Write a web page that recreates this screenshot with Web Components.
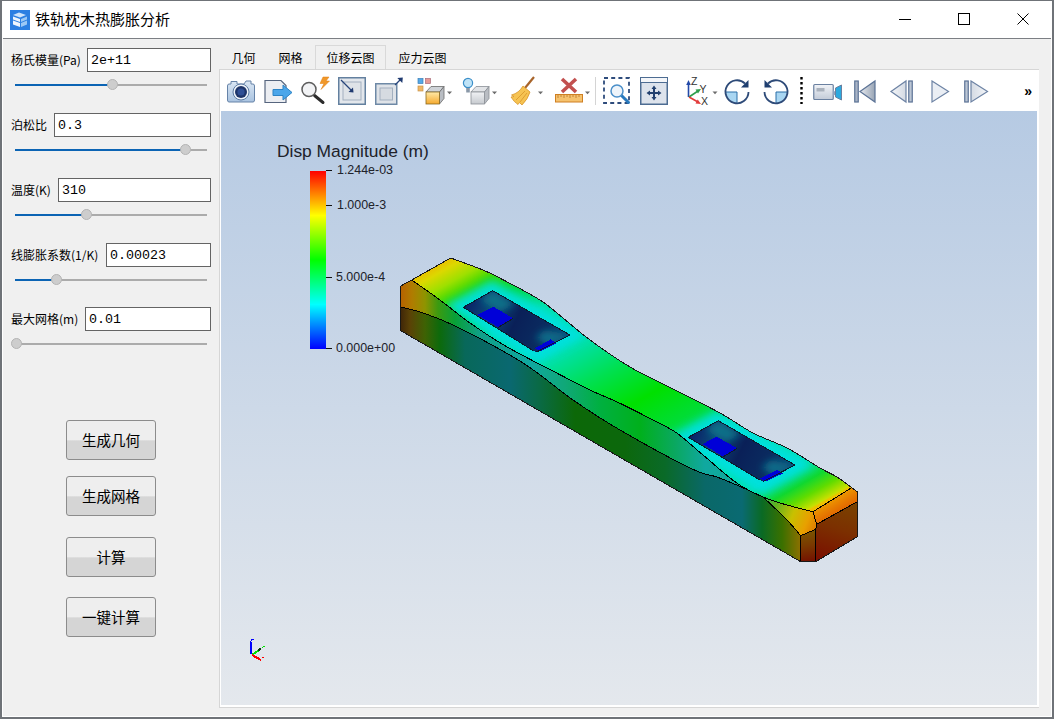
<!DOCTYPE html>
<html lang="zh">
<head>
<meta charset="utf-8">
<title>铁轨枕木热膨胀分析</title>
<style>
    html, body { margin: 0; padding: 0; background: #f0f0f0; }
    body { font-family: "Noto Sans CJK SC", "Liberation Sans", sans-serif; font-size: 12px; color: #000; }
</style>
</head>
<body>
<app-window>
    <title-bar slot="title">铁轨枕木热膨胀分析</title-bar>
    <side-panel slot="side">
        <param-row label="杨氏模量(Pa)" value="2e+11" lw="76" pos="97"></param-row>
        <param-row label="泊松比" value="0.3" lw="43" pos="170"></param-row>
        <param-row label="温度(K)" value="310" lw="47" pos="71"></param-row>
        <param-row label="线膨胀系数(1/K)" value="0.00023" lw="95" pos="41" style="height:64px"></param-row>
        <param-row label="最大网格(m)" value="0.01" lw="74" pos="1"></param-row>
        <sim-button style="margin-top:48px">生成几何</sim-button>
        <sim-button style="margin-top:16px">生成网格</sim-button>
        <sim-button style="margin-top:21px">计算</sim-button>
        <sim-button style="margin-top:20px">一键计算</sim-button>
    </side-panel>
    <tab-pane slot="pane">
        <tab-item slot="tabs" style="padding-left:10.5px;padding-right:12.5px">几何</tab-item>
        <tab-item slot="tabs" style="padding-left:10.5px;padding-right:12.5px">网格</tab-item>
        <tab-item slot="tabs" active>位移云图</tab-item>
        <tab-item slot="tabs" style="padding-left:12.5px">应力云图</tab-item>
        <tool-bar>
            <tool-icon name="camera" w="28" style="margin-left:6px"></tool-icon>
            <tool-icon name="exportDoc" w="29" style="margin-left:9px"></tool-icon>
            <tool-icon name="spark" w="25" style="margin-left:8px"></tool-icon>
            <tool-icon name="boxIn" w="28" style="margin-left:12px"></tool-icon>
            <tool-icon name="boxOut" w="28" style="margin-left:9px"></tool-icon>
            <tool-icon name="cubeColors" w="35" style="margin-left:14px"></tool-icon>
            <tool-icon name="cubeLight" w="35" style="margin-left:10px"></tool-icon>
            <tool-icon name="broom" w="33" style="margin-left:13px"></tool-icon>
            <tool-icon name="ruler" w="35" style="margin-left:12px"></tool-icon>
            <tool-icon name="sep" w="1" style="margin-left:5px"></tool-icon>
            <tool-icon name="dashZoom" w="28" style="margin-left:7px"></tool-icon>
            <tool-icon name="moveBox" w="28" style="margin-left:9px"></tool-icon>
            <tool-icon name="axes" w="32" style="margin-left:18px"></tool-icon>
            <tool-icon name="rotCw" w="27" style="margin-left:6px"></tool-icon>
            <tool-icon name="rotCcw" w="27" style="margin-left:11px"></tool-icon>
            <tool-icon name="dots" w="3" style="margin-left:11px"></tool-icon>
            <tool-icon name="video" w="29" style="margin-left:10px"></tool-icon>
            <tool-icon name="first" w="22" style="margin-left:12px"></tool-icon>
            <tool-icon name="prev" w="24" style="margin-left:14px"></tool-icon>
            <tool-icon name="play" w="19" style="margin-left:17px"></tool-icon>
            <tool-icon name="next" w="25" style="margin-left:14px"></tool-icon>
            <span slot="more">»</span>
        </tool-bar>
        <vtk-view></vtk-view>
    </tab-pane>
</app-window>

<script>
class AppWindow extends HTMLElement {
    constructor() {
        super();
        this.attachShadow({ mode: 'open' });
        this.shadowRoot.innerHTML = `
            <style>
                :host {
                    display: flex;
                    flex-direction: column;
                    box-sizing: border-box;
                    width: 1054px;
                    height: 719px;
                    border: solid #6f7378;
                    border-width: 1px 2px 2px 2px;
                    background: #fff;
                    overflow: hidden;
                }
                .main {
                    flex: 1;
                    min-height: 0;
                    display: flex;
                    background: #f0f0f0;
                    margin: 0 1px 1px 1px;
                    border-top: 1px solid #7c7f84;
                }
            </style>
            <slot name="title"></slot>
            <div class="main">
                <slot name="side"></slot>
                <slot name="pane"></slot>
            </div>
        `;
    }
}

class TitleBar extends HTMLElement {
    constructor() {
        super();
        this.attachShadow({ mode: 'open' });
        this.shadowRoot.innerHTML = `
            <style>
                :host {
                    display: flex;
                    align-items: center;
                    height: 37px;
                    flex: none;
                    background: #fff;
                    font-size: 15px;
                    padding-left: 8px;
                }
                .logo { width: 20px; height: 20px; margin: 0 5px 0 0; flex: none; }
                .text { flex: 1; position: relative; top: -1px; }
                .btn { width: 12px; height: 12px; margin-right: 47px; flex: none; display: block; position: relative; top: -1px; }
                .btn:last-child { margin-right: 23px; }
            </style>
            <svg class="logo" viewBox="0 0 20 20">
                <rect width="20" height="20" fill="#2c7fe2"/>
                <path d="M3 5 L9 2.5 L16 5 L10 7.5 Z" fill="#cfe4fb"/>
                <path d="M3 6.5 L10 9 V12 L3 9.5 Z M3 10.5 L10 13 V17 L3 14.5 Z" fill="#fff" opacity=".92"/>
                <path d="M11 9 L17 6.5 V9.5 L11 12 Z M11 13 L17 10.5 V14.5 L11 17 Z" fill="#9cc8f5"/>
            </svg>
            <span class="text"><slot></slot></span>
            <svg class="btn" viewBox="0 0 12 12"><path d="M0 6.5 H12" stroke="#000" fill="none"/></svg>
            <svg class="btn" viewBox="0 0 12 12"><rect x=".5" y=".5" width="11" height="11" stroke="#000" fill="none"/></svg>
            <svg class="btn" viewBox="0 0 12 12"><path d="M.5 .5 L11.5 11.5 M11.5 .5 L.5 11.5" stroke="#000" fill="none"/></svg>
        `;
    }
}

class SidePanel extends HTMLElement {
    constructor() {
        super();
        this.attachShadow({ mode: 'open' });
        this.shadowRoot.innerHTML = `
            <style>
                :host {
                    display: flex;
                    flex-direction: column;
                    box-sizing: border-box;
                    width: 216px;
                    flex: none;
                    padding: 9px 8px 0 8px;
                }
            </style>
            <slot></slot>
        `;
    }
}

class ParamRow extends HTMLElement {
    constructor() {
        super();
        this.attachShadow({ mode: 'open' });
    }

    connectedCallback() {
        const label = this.getAttribute('label');
        const value = this.getAttribute('value');
        const lw = this.getAttribute('lw');
        const pos = Number(this.getAttribute('pos'));

        this.shadowRoot.innerHTML = `
            <style>
                :host { display: block; height: 65px; flex: none; }
                .row { display: flex; align-items: center; height: 24px; }
                .label { width: ${lw}px; flex: none; white-space: nowrap; font-size: 12px; position: relative; top: -1px; }
                .field {
                    flex: 1;
                    box-sizing: border-box;
                    height: 24px;
                    border: 1px solid #646464;
                    background: #fff;
                    padding: 1px 0 0 3px;
                    font: 13.33px/22px "Liberation Mono", monospace;
                }
                .slider {
                    position: relative;
                    display: flex;
                    align-items: center;
                    height: 11px;
                    margin: 7px 4px 0 4px;
                }
                .fill { width: ${pos}px; height: 2px; background: #0b64b4; flex: none; }
                .rest { flex: 1; height: 2px; background: #ababab; }
                .handle {
                    position: absolute;
                    left: ${pos - 5.5}px;
                    top: 0;
                    box-sizing: border-box;
                    width: 11px;
                    height: 11px;
                    border-radius: 50%;
                    background: #cdcdcd;
                    border: 1px solid #b4b4b4;
                }
            </style>
            <div class="row">
                <span class="label">${label}</span>
                <div class="field">${value}</div>
            </div>
            <div class="slider">
                <div class="fill"></div>
                <div class="rest"></div>
                <div class="handle"></div>
            </div>
        `;
    }
}

class SimButton extends HTMLElement {
    constructor() {
        super();
        this.attachShadow({ mode: 'open' });
        this.shadowRoot.innerHTML = `
            <style>
                :host {
                    display: flex;
                    align-items: center;
                    justify-content: center;
                    box-sizing: border-box;
                    flex: none;
                    align-self: flex-start;
                    width: 90px;
                    height: 40px;
                    margin-left: 55px;
                    padding-bottom: 2px;
                    border: 1px solid #8c8c8c;
                    border-radius: 3px;
                    background: linear-gradient(#eeeeee 0, #eeeeee 50%, #d5d5d5 52%, #d5d5d5 100%);
                    font-size: 14.5px;
                }
            </style>
            <slot></slot>
        `;
    }
}

class TabPane extends HTMLElement {
    constructor() {
        super();
        this.attachShadow({ mode: 'open' });
        this.shadowRoot.innerHTML = `
            <style>
                :host {
                    display: flex;
                    flex-direction: column;
                    box-sizing: border-box;
                    width: 820px;
                    flex: none;
                    padding-top: 6px;
                    padding-bottom: 8px;
                }
                .tabs { display: flex; height: 24px; flex: none; padding-left: 2px; }
                .frame {
                    flex: 1;
                    min-height: 0;
                    display: flex;
                    flex-direction: column;
                    background: #fff;
                    border: solid #d6d6d6;
                    border-width: 1px 0 1px 1px;
                    padding: 0 2px 2px 1px;
                }
            </style>
            <div class="tabs"><slot name="tabs"></slot></div>
            <div class="frame"><slot></slot></div>
        `;
    }
}

class TabItem extends HTMLElement {
    constructor() {
        super();
        this.attachShadow({ mode: 'open' });
        this.shadowRoot.innerHTML = `
            <style>
                :host {
                    display: flex;
                    align-items: center;
                    box-sizing: border-box;
                    height: 24px;
                    padding: 1px 11.5px 0 11.5px;
                    font-size: 12px;
                    white-space: nowrap;
                }
                :host([active]) {
                    border: solid #d9d9d9;
                    border-width: 1px 1px 0 1px;
                    padding: 0 10.5px 0 10.5px;
                }
            </style>
            <slot></slot>
        `;
    }
}

class ToolBar extends HTMLElement {
    constructor() {
        super();
        this.attachShadow({ mode: 'open' });
        this.shadowRoot.innerHTML = `
            <style>
                :host {
                    display: flex;
                    align-items: flex-start;
                    box-sizing: border-box;
                    height: 41px;
                    flex: none;
                    padding-top: 7px;
                    background: #fff;
                }
                .more {
                    margin-left: auto;
                    margin-right: 5px;
                    font: bold 14px/28px "Liberation Sans", sans-serif;
                }
            </style>
            <slot></slot>
            <span class="more"><slot name="more"></slot></span>
        `;
    }
}

// icon bodies, each drawn in a box of (w x 28)
const ARROW = x => `<path d="M${x} 14.5 h5 l-2.5 2.8 z" fill="#6b6b6b"/>`;
const ICONS = {
    camera: `<defs><linearGradient id="g" x1="0" y1="0" x2="0" y2="1"><stop offset="0" stop-color="#dbe7f4"/><stop offset="1" stop-color="#a9c3e0"/></linearGradient></defs>
        <path d="M4 7 V4.5 H10 V7 H17 L19 4 H24 V7 H26 Q27.5 7 27.5 9 V23 Q27.5 25 26 25 H2 Q.5 25 .5 23 V9 Q.5 7 2 7 Z" fill="url(#g)" stroke="#6683a8"/>
        <circle cx="14" cy="15" r="8" fill="#eef3f9" stroke="#5c7ba3"/>
        <circle cx="14" cy="15" r="6" fill="#1d3468"/>
        <circle cx="14" cy="15" r="3.6" fill="#2f4f95"/>`,
    exportDoc: `<path d="M1 3.5 H17 L22 8.5 V25.5 H1 Z" fill="#eceef2" stroke="#56657e" stroke-width="1.2"/>
        <path d="M9 12.5 H19 V8 L28 15.5 L19 23 V18.5 H9 Z" fill="#4ba6ea" stroke="#2c83c5"/>`,
    spark: `<path d="M22 0 L28 0 L25 4 L28.5 4 L20 12.5 L23 6.5 L19 6.5 Z" fill="#f0982a" stroke="#e07f12" stroke-width=".5"/>
        <path d="M13.5 18.5 L22 25.5" stroke="#2b2b2b" stroke-width="3" stroke-linecap="round"/>
        <circle cx="8" cy="12.5" r="7" fill="#f2f3f5" stroke="#5d5d5d" stroke-width="1.5"/>`,
    boxIn: `<rect x=".75" y=".75" width="26.5" height="26.5" fill="#e3e7ec" stroke="#63809f" stroke-width="1.5"/>
        <rect x="5" y="5" width="18" height="18" fill="#dfe3e8" stroke="#a3b0bf"/>
        <path d="M3 3 L14 14" stroke="#26447a" stroke-width="1.2"/><path d="M15.5 15.5 L15 10.5 L10.5 15 Z" fill="#1f3a70"/>`,
    boxOut: `<rect x=".75" y="6.75" width="21" height="20.5" fill="#dfe3e8" stroke="#6e89a6" stroke-width="1.5"/>
        <rect x="5" y="11" width="12.5" height="12" fill="#d6dbe1" stroke="#a3b0bf"/>
        <path d="M20 8 L26 2" stroke="#26447a" stroke-width="1.2"/><path d="M27.8 .5 L27.3 6 L22.3 1 Z" fill="#1f3a70"/>`,
    cubeColors: `<defs><linearGradient id="g" x1="0" y1="0" x2="0" y2="1"><stop offset="0" stop-color="#ffeaa8"/><stop offset="1" stop-color="#f5a92e"/></linearGradient></defs>
        <rect x="1" y="1.5" width="5" height="5" fill="#55a8e6" stroke="#3b7fb8" stroke-width=".7"/>
        <rect x="8.5" y="1.5" width="5" height="5" fill="#e79a94" stroke="#a86a7a" stroke-width=".7"/>
        <rect x="1" y="9" width="5" height="5" fill="#f1b765" stroke="#c8954a" stroke-width=".7"/>
        <path d="M9 15 L14 9.5 H27 L22.5 15 Z" fill="#cfd3d8" stroke="#6a6a6a" stroke-width=".8"/>
        <path d="M22.5 15 L27 9.5 V21.5 L22.5 27 Z" fill="#b9bdc3" stroke="#6a6a6a" stroke-width=".8"/>
        <rect x="9" y="15" width="13.5" height="12" fill="url(#g)" stroke="#8a6a20" stroke-width=".8"/>${ARROW(30)}`,
    cubeLight: `<defs><linearGradient id="g" x1="0" y1="0" x2="0" y2="1"><stop offset="0" stop-color="#f0f2f4"/><stop offset="1" stop-color="#c6cacf"/></linearGradient></defs>
        <circle cx="6" cy="6" r="4.6" fill="#bfe3f7" stroke="#3b8fc9" stroke-width="1.2"/>
        <rect x="4.2" y="11" width="3.6" height="4.5" fill="#8a98a8"/>
        <path d="M9 15 L14 9.5 H27 L22.5 15 Z" fill="#e2e4e7" stroke="#8a8f96" stroke-width=".8"/>
        <path d="M22.5 15 L27 9.5 V21.5 L22.5 27 Z" fill="#b9bdc3" stroke="#8a8f96" stroke-width=".8"/>
        <rect x="9" y="15" width="13.5" height="12" fill="url(#g)" stroke="#8a8f96" stroke-width=".8"/>${ARROW(30)}`,
    broom: `<path d="M24 0 L15 11" stroke="#a8642a" stroke-width="2.2"/>
        <path d="M13 9 L20 15 Q18 22 12 28 L9.5 25.5 L8 27.5 Q4 25 1 20 L4 19.5 L1.5 18 Q9 16 13 9 Z" fill="#f6c352" stroke="#d8962a" stroke-width=".8"/>
        <path d="M15 14 L6 23 M17 16 L10 25" stroke="#d8962a" stroke-width=".8"/>${ARROW(28)}`,
    ruler: `<path d="M7 2 L21 15 M21 2 L7 15" stroke="#c2504f" stroke-width="3.6"/>
        <rect x=".5" y="17.5" width="27" height="7.5" fill="#f5c26e" stroke="#cf7f22"/>
        <path d="M3 18 v3 M6 18 v2 M9 18 v3 M12 18 v2 M15 18 v3 M18 18 v2 M21 18 v3 M24 18 v2" stroke="#b9762a" stroke-width=".8"/>${ARROW(30)}`,
    sep: `<rect x="0" y="0" width="1" height="28" fill="#d4d4d4"/>`,
    dashZoom: `<rect x="1" y="1" width="25" height="25" fill="none" stroke="#2e4c7c" stroke-width="1.8" stroke-dasharray="4 3.2"/>
        <path d="M18 18 L25.5 25.5" stroke="#2879bd" stroke-width="3" stroke-linecap="round"/>
        <circle cx="14" cy="14" r="6" fill="#eef4fa" stroke="#4b8fc9" stroke-width="1.5"/>`,
    moveBox: `<rect x=".75" y=".75" width="26.5" height="26.5" fill="#dde3ec" stroke="#4d6c92" stroke-width="1.5"/>
        <rect x="1" y="1" width="26" height="5" fill="#f4f6f9"/><path d="M1 5.5 H27" stroke="#4d6c92"/>
        <path d="M14 8.5 L16.5 12 H15 V15 H18 V13.5 L21.5 16 L18 18.5 V17 H15 V20 H16.5 L14 23.5 L11.5 20 H13 V17 H10 V18.5 L6.5 16 L10 13.5 V15 H13 V12 H11.5 Z" fill="#22406f"/>`,
    axes: `<path d="M2.5 20 V7" stroke="#2349a8" stroke-width="1.6"/><path d="M2.5 3 L.2 8 H4.8 Z" fill="#2349a8"/>
        <path d="M3 20 L12 14" stroke="#2f9e4c" stroke-width="1.6"/><path d="M15 12 L9.5 12.6 L12 16.6 Z" fill="#2f9e4c"/>
        <path d="M3 20 L12 25" stroke="#e23a3a" stroke-width="1.6"/><path d="M15 27 L9.5 26.6 L11.7 22.6 Z" fill="#e23a3a"/>
        <text x="5" y="8" font-family="Liberation Sans, sans-serif" font-size="10.5" fill="#333">Z</text>
        <text x="13.5" y="15.5" font-family="Liberation Sans, sans-serif" font-size="10.5" fill="#333">Y</text>
        <text x="15" y="27.5" font-family="Liberation Sans, sans-serif" font-size="10.5" fill="#333">X</text>
        <path d="M26.5 14.5 h5 l-2.5 2.8 z" fill="#6b6b6b"/>`,
    rotCw: `<path d="M2 15 H13 V26 A11 11 0 0 1 2 15 Z" fill="#a9d6f2"/>
        <path d="M2 15 H13 V26" fill="none" stroke="#2b6ea8" stroke-width="1"/>
        <path d="M21 6.5 A11.5 11.5 0 1 0 24.5 15" fill="none" stroke="#2d4a78" stroke-width="1.8"/>
        <path d="M24.5 3 V10.5 H17 Z" fill="#1f3f70"/>`,
    rotCcw: `<path d="M25 15 H14 V26 A11 11 0 0 0 25 15 Z" fill="#a9d6f2"/>
        <path d="M25 15 H14 V26" fill="none" stroke="#2b6ea8" stroke-width="1"/>
        <path d="M6 6.5 A11.5 11.5 0 1 1 2.5 15" fill="none" stroke="#2d4a78" stroke-width="1.8"/>
        <path d="M2.5 3 V10.5 H10 Z" fill="#1f3f70"/>`,
    dots: `<path d="M1.5 0 V27" stroke="#000" stroke-width="2.4" stroke-dasharray="2.4 2.6"/>`,
    video: `<defs><linearGradient id="g" x1="0" y1="0" x2="0" y2="1"><stop offset="0" stop-color="#f1f3f7"/><stop offset="1" stop-color="#c3cbd8"/></linearGradient></defs>
        <rect x=".75" y="7.5" width="19.5" height="15" rx="1" fill="url(#g)" stroke="#6a80a0" stroke-width="1.2"/>
        <rect x="3.5" y="11" width="8" height="3.5" fill="#aab2bd"/>
        <path d="M20 13 L22.5 15 V17.5 L20 19 Z" fill="#8ea3c0"/>
        <path d="M22.5 11 L28.5 8 V23 L22.5 20 Z" fill="#2da9de" stroke="#6a80a0"/>`,
    first: `<defs><linearGradient id="g" x1="0" y1="0" x2="1" y2="0"><stop offset="0" stop-color="#e8ebf0"/><stop offset="1" stop-color="#98a4b4"/></linearGradient></defs>
        <rect x=".75" y="4" width="3.5" height="21" fill="#a9b4c6" stroke="#5c7396" stroke-width="1.2"/>
        <path d="M6 14.5 L21 4 V25 Z" fill="url(#g)" stroke="#5c7396" stroke-width="1.2"/>`,
    prev: `<defs><linearGradient id="g" x1="0" y1="0" x2="1" y2="0"><stop offset="0" stop-color="#f4f6f9"/><stop offset="1" stop-color="#d4dae3"/></linearGradient></defs>
        <path d="M1 14.5 L16 4 V25 Z" fill="url(#g)" stroke="#6d83a4" stroke-width="1.2"/>
        <rect x="18.75" y="4" width="3.5" height="21" fill="#bcc6d5" stroke="#5c7396" stroke-width="1.2"/>`,
    play: `<path d="M1 4 L17.5 14.5 L1 25 Z" fill="#eaeef4" stroke="#6d83a4" stroke-width="1.2"/>`,
    next: `<defs><linearGradient id="g" x1="0" y1="0" x2="1" y2="0"><stop offset="0" stop-color="#d4dae3"/><stop offset="1" stop-color="#f4f6f9"/></linearGradient></defs>
        <rect x=".75" y="4" width="3.5" height="21" fill="#bcc6d5" stroke="#5c7396" stroke-width="1.2"/>
        <path d="M7 4 L23.5 14.5 L7 25 Z" fill="url(#g)" stroke="#6d83a4" stroke-width="1.2"/>`
};

class ToolIcon extends HTMLElement {
    constructor() {
        super();
        this.attachShadow({ mode: 'open' });
    }

    connectedCallback() {
        const w = Number(this.getAttribute('w'));
        const body = ICONS[this.getAttribute('name')];
        this.shadowRoot.innerHTML = `
            <style>
                :host { display: block; flex: none; width: ${w}px; height: 28px; }
                svg { display: block; overflow: visible; }
            </style>
            <svg width="${w}" height="28" viewBox="0 0 ${w} 28">${body}</svg>
        `;
    }
}

// smooth path through a list of points
function smooth(pts) {
    let d = '';
    for (let i = 0; i < pts.length - 1; i++) {
        const p0 = pts[i - 1] || pts[i];
        const p1 = pts[i];
        const p2 = pts[i + 1];
        const p3 = pts[i + 2] || p2;
        const c1 = [p1[0] + (p2[0] - p0[0]) / 6, p1[1] + (p2[1] - p0[1]) / 6];
        const c2 = [p2[0] - (p3[0] - p1[0]) / 6, p2[1] - (p3[1] - p1[1]) / 6];
        d += ` C${c1[0].toFixed(1)} ${c1[1].toFixed(1)} ${c2[0].toFixed(1)} ${c2[1].toFixed(1)} ${p2[0]} ${p2[1]}`;
    }
    return d;
}

const stops = list => list.map(([o, c]) => `<stop offset="${o}" stop-color="${c}"/>`).join('');
// x based stops for the side faces (400..860)
const xStops = list => stops(list.map(([x, c]) => [((x - 400) / 460).toFixed(4), c]));
// position along the beam centre line for the top face
const tStops = list => stops(list.map(([x, c]) => [((x - 430) / 402).toFixed(4), c]));

class BeamModel extends HTMLElement {
    constructor() {
        super();
        this.attachShadow({ mode: 'open' });
    }

    connectedCallback() {
        const topEdge = [[450.7,258],[483,270],[506.7,281.7],[540,300],[563,318],[590,340],[630,367],[675,390],[720,413],[753,433],[787,448],[820,468],[837,477],[851.7,487.7]];
        const edge = [[411.7,280],[440,300],[470,323],[506.7,346.7],[556.7,373],[590,390],[620,403.3],[653,420],[676.7,433],[703,455],[736.7,483],[763,497],[787,505],[813,511.7]];
        const curve = [[400.7,307],[423,313],[456.7,326.7],[523,363],[573,400],[620,430],[690,468],[716.7,477],[736.7,485],[763,497]];
        const curve2 = [[763,497],[787,520],[800.7,535.7]];
        const rev = a => a.slice().reverse();

        const topFace = `M411.7 280 L450.7 258${smooth(topEdge)} L813 511.7${smooth(rev(edge))} Z`;
        const band = `M400.7 286 L411.7 280${smooth(edge.slice(0, 12))}${smooth(rev(curve))} Z`;
        const side = `M400.7 307${smooth(curve)}${smooth(curve2)} L800.7 561.7 L400.7 330.7 Z`;
        const chamfer = `M763 497${smooth(edge.slice(11))} L816.7 524.3 L815.7 529.3 L800.7 535.7${smooth(rev(curve2))} Z`;
        const pocket1 = 'M492.7 290.7 L570 335 L536.5 352 L533 350.5 L463.3 307.3 Z';
        const pocket2 = 'M718.3 420.7 L795 465 L763 481.7 L760 480 L688.3 437.3 Z';
        const pocketStops = stops([[0,'#0a2468'],[.22,'#0a4a78'],[.5,'#0a2058'],[.8,'#0a2c60'],[1,'#0b4a78']]);

        this.shadowRoot.innerHTML = `
            <style>
                :host { display: block; position: absolute; inset: 0; }
                svg { display: block; width: 100%; height: 100%; }
            </style>
            <svg viewBox="221 111 816 594">
                <defs>
                    <linearGradient id="topG" gradientUnits="userSpaceOnUse" x1="430" y1="269" x2="624.5" y2="614.4">
                        ${tStops([[425,'#e8c000'],[438,'#dcd800'],[452,'#9ee000'],[468,'#30d800'],[490,'#00d838'],[520,'#00e0a0'],[575,'#00e0a0'],[610,'#00e050'],[650,'#00e000'],[695,'#00dc40'],[730,'#00e0a0'],[785,'#00e0a8'],[805,'#10d830'],[818,'#60dc00'],[830,'#c8e000'],[840,'#f0c000']])}
                    </linearGradient>
                    <linearGradient id="bandG" gradientUnits="userSpaceOnUse" x1="400" y1="0" x2="860" y2="0">
                        ${xStops([[400,'#b86000'],[412,'#b07c00'],[425,'#8f9400'],[438,'#3c9a10'],[455,'#08a038'],[480,'#10a088'],[530,'#10a8a0'],[565,'#10a878'],[600,'#00b040'],[640,'#00b01c'],[675,'#0aa860'],[705,'#10a8a0'],[745,'#10a898'],[765,'#2aa860']])}
                    </linearGradient>
                    <linearGradient id="sideG" gradientUnits="userSpaceOnUse" x1="400" y1="0" x2="860" y2="0">
                        ${xStops([[400,'#3e2408'],[410,'#5a4206'],[425,'#3e6204'],[440,'#0c6a0c'],[465,'#08685a'],[510,'#0a6870'],[540,'#0a6a44'],[575,'#0c6808'],[625,'#0c680c'],[665,'#0a6a28'],[705,'#0a6868'],[742,'#0a6a72'],[762,'#0a6a24'],[782,'#3a7000'],[800,'#8a7000']])}
                    </linearGradient>
                    <linearGradient id="chamG" gradientUnits="userSpaceOnUse" x1="760" y1="495" x2="818" y2="520">
                        ${stops([[0,'#28a860'],[.3,'#60b020'],[.6,'#c8c000'],[.85,'#e8a000'],[1,'#e08000']])}
                    </linearGradient>
                    <linearGradient id="capG" gradientUnits="userSpaceOnUse" x1="828" y1="492" x2="842" y2="515">
                        ${stops([[0,'#f0b800'],[.55,'#e88000'],[1,'#dd5a00']])}
                    </linearGradient>
                    <linearGradient id="endG" gradientUnits="userSpaceOnUse" x1="845" y1="495" x2="825" y2="560">
                        ${stops([[0,'#7a4600'],[.5,'#7c3000'],[1,'#7a1000']])}
                    </linearGradient>
                    <linearGradient id="frontG" gradientUnits="userSpaceOnUse" x1="805" y1="530" x2="810" y2="562">
                        ${stops([[0,'#7a5800'],[.5,'#7a3800'],[1,'#741000']])}
                    </linearGradient>
                    <linearGradient id="p1" gradientUnits="userSpaceOnUse" x1="470" y1="300" x2="560" y2="345">${pocketStops}</linearGradient>
                    <linearGradient id="p2" gradientUnits="userSpaceOnUse" x1="695" y1="430" x2="785" y2="475">${pocketStops}</linearGradient>
                    <filter id="blur" x="-30%" y="-30%" width="160%" height="160%"><feGaussianBlur stdDeviation="5"/></filter>
                    <filter id="blurS" x="-50%" y="-50%" width="200%" height="200%"><feGaussianBlur stdDeviation="3.5"/></filter>
                    <clipPath id="topClip"><path d="${topFace}"/></clipPath>
                    <clipPath id="pk1"><path d="${pocket1}"/></clipPath>
                    <clipPath id="pk2"><path d="${pocket2}"/></clipPath>
                </defs>

                <g shape-rendering="crispEdges">
                    <path d="${side}" fill="url(#sideG)"/>
                    <path d="${band}" fill="url(#bandG)"/>
                    <path d="${topFace}" fill="url(#topG)"/>
                    <path d="${chamfer}" fill="url(#chamG)"/>
                    <path d="M813 511.7 L851.7 487.7 L857.3 491.7 V501.7 L816.7 524.3 Z" fill="url(#capG)"/>
                    <path d="M857.3 501.7 V536.7 L815.7 561.7 V529.3 L816.7 524.3 Z" fill="url(#endG)"/>
                    <path d="M800.7 535.7 L815.7 529.3 V561.7 H800.7 Z" fill="url(#frontG)"/>
                </g>

                <g clip-path="url(#topClip)">
                    <path d="M492 280 L590 335 L536 365 L444 306 Z" fill="#00e0e0" filter="url(#blur)" opacity=".95"/>
                    <path d="M718 410 L815 465 L762 495 L668 437 Z" fill="#00e0e0" filter="url(#blur)" opacity=".95"/>
                </g>

                <g shape-rendering="crispEdges">
                    <path d="${pocket1}" fill="url(#p1)"/>
                    <path d="${pocket2}" fill="url(#p2)"/>
                </g>
                <g clip-path="url(#pk1)">
                    <path d="M492 291 L515 304 L500 312 L480 300 Z" fill="#0a7088" filter="url(#blurS)"/>
                    <path d="M545 330 L570 335 L550 346 L535 338 Z" fill="#0a6a88" filter="url(#blurS)"/>
                </g>
                <g clip-path="url(#pk2)">
                    <path d="M718 421 L741 434 L726 442 L706 430 Z" fill="#0a7088" filter="url(#blurS)"/>
                    <path d="M771 460 L795 465 L776 476 L761 468 Z" fill="#0a6a88" filter="url(#blurS)"/>
                </g>

                <g shape-rendering="crispEdges">
                    <path d="M493.3 306.7 L513.3 318.3 L498.3 327.3 L477.3 315 Z" fill="#0000d8"/>
                    <path d="M550.7 339.3 L556.7 343.3 L540 351.7 L535 348.3 Z" fill="#0000d8"/>
                    <path d="M716.7 436.7 L737.3 448.3 L723.3 456.7 L702.7 444 Z" fill="#0000d8"/>
                    <path d="M776.7 470 L783.3 473.3 L765 481.7 L760 478.3 Z" fill="#0000d8"/>
                    <g fill="none" stroke="#0c1a2c" stroke-width="1">
                        <path d="M492.7 290.7 L570 335 L536.5 352 M533 350.5 L463.3 307.3 L492.7 290.7"/>
                        <path d="M513.3 318.3 L498.3 327.3"/>
                        <path d="M718.3 420.7 L795 465 L763 481.7 M760 480 L688.3 437.3 L718.3 420.7"/>
                        <path d="M737.3 448.3 L723.3 456.7"/>
                    </g>
                    <g fill="none" stroke="#000" stroke-width="1">
                        <path d="M411.7 280 ${smooth(edge)} L851.7 487.7"/>
                        <path d="M400.7 307 ${smooth(curve)}${smooth(curve2)}"/>
                        <path d="M813 511.7 L816.7 524.3 L815.7 529.3 V561.7 M800.7 535.7 L815.7 529.3 M816.7 524.3 L857.3 501.7"/>
                        <path d="M800.7 535.7 V561.7"/>
                        <path d="M400.7 286 L411.7 280 L450.7 258${smooth(topEdge)} L857.3 491.7 V536.7 L815.7 561.7 H800.7 L400.7 330.7 Z" stroke="#181818"/>
                    </g>
                </g>

                <g fill="none" stroke-width="2" shape-rendering="crispEdges">
                    <path d="M250.7 654 V642" stroke="#0000ff"/>
                    <path d="M250.7 642 Q251 639 254 639.5" stroke="#0000ff" stroke-width="1"/>
                    <path d="M252 655 L260 649.5" stroke="#00e000"/>
                    <path d="M258 650.5 L261 648.5" stroke="#0b3d0b"/>
                    <path d="M262.5 647.5 L264.5 646" stroke="#00e000" stroke-width="1"/>
                    <path d="M252 655 L261 660" stroke="#ff0000"/>
                    <path d="M262 658 L264.5 657.5" stroke="#ff0000" stroke-width="1"/>
                </g>
            </svg>
        `;
    }
}

class VtkLegend extends HTMLElement {
    constructor() {
        super();
        this.attachShadow({ mode: 'open' });
        const ticks = [['1.244e-03', 170, 337], ['1.000e-3', 205, 337], ['5.000e-4', 276.5, 336], ['0.000e+00', 347.5, 336]];
        const tickHtml = ticks.map(([text, y, x]) => `
            <i class="tick" style="top:${y - 141}px"></i>
            <span class="val" style="top:${y - 141 - 8}px;left:${x - 277}px">${text}</span>`).join('');
        this.shadowRoot.innerHTML = `
            <style>
                :host {
                    display: block;
                    position: absolute;
                    left: 56px;
                    top: 30px;
                    width: 170px;
                    height: 220px;
                    font-family: "Liberation Sans", Arial, sans-serif;
                    color: #20222a;
                }
                .title { font-size: 17.4px; line-height: 20px; white-space: nowrap; }
                .bar {
                    position: absolute;
                    left: 33px;
                    top: 30px;
                    width: 16px;
                    height: 178px;
                    background: linear-gradient(#f00 0, #ff0 25%, #0f0 50%, #0ff 75%, #00f 100%);
                }
                .tick { position: absolute; left: 49px; width: 6px; height: 1px; background: #111; }
                .val { position: absolute; font-size: 12.45px; line-height: 16px; white-space: nowrap; }
            </style>
            <div class="title">Disp Magnitude (m)</div>
            <div class="bar"></div>
            ${tickHtml}
        `;
    }
}

class VtkView extends HTMLElement {
    constructor() {
        super();
        this.attachShadow({ mode: 'open' });
        this.shadowRoot.innerHTML = `
            <style>
                :host {
                    display: block;
                    position: relative;
                    flex: 1;
                    min-height: 0;
                    background: linear-gradient(#b6cae3, #e4e8ed);
                    overflow: hidden;
                }
            </style>
            <beam-model></beam-model>
            <vtk-legend></vtk-legend>
        `;
    }
}

customElements.define('app-window', AppWindow);
customElements.define('title-bar', TitleBar);
customElements.define('side-panel', SidePanel);
customElements.define('param-row', ParamRow);
customElements.define('sim-button', SimButton);
customElements.define('tab-pane', TabPane);
customElements.define('tab-item', TabItem);
customElements.define('tool-bar', ToolBar);
customElements.define('tool-icon', ToolIcon);
customElements.define('beam-model', BeamModel);
customElements.define('vtk-legend', VtkLegend);
customElements.define('vtk-view', VtkView);
</script>
</body>
</html>
